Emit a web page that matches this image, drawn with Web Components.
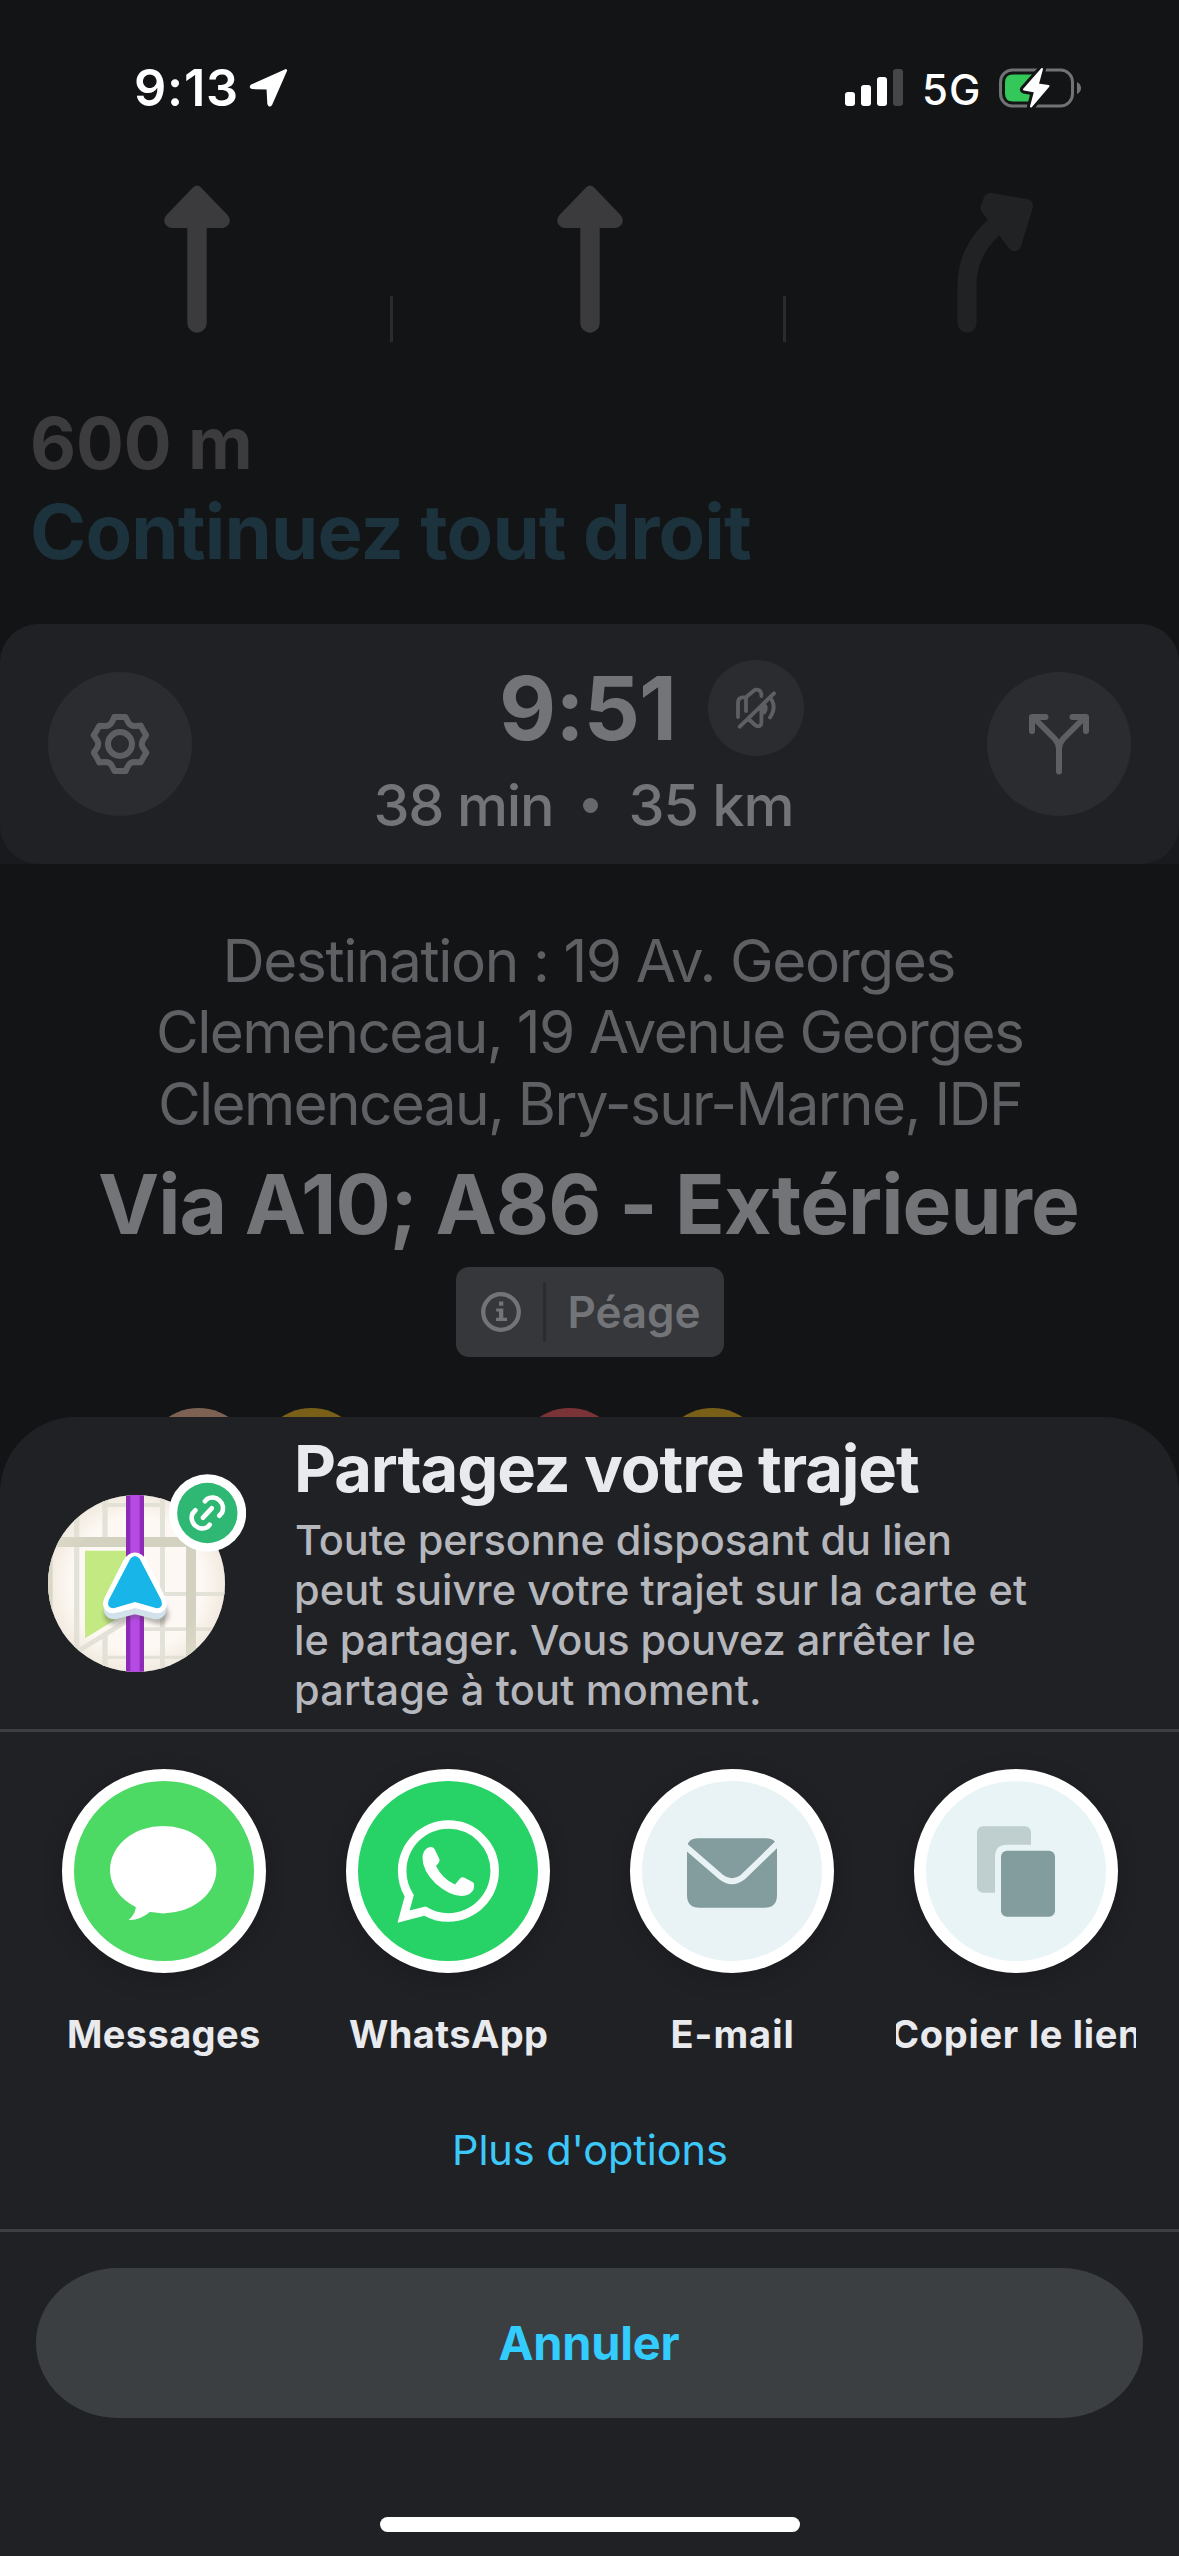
<!DOCTYPE html>
<html lang="fr">
<head>
<meta charset="utf-8">
<title>Partagez votre trajet</title>
<style>
  html, body { margin: 0; padding: 0; background: #131416; }
  body { width: 1179px; height: 2556px; overflow: hidden; font-family: Inter, "Liberation Sans", sans-serif; }
</style>
</head>
<body>
<nav-screen></nav-screen>
<script>
const define = (name, html, setup) => {
  const tpl = document.createElement('template');
  tpl.innerHTML = html.trim();
  customElements.define(name, class extends HTMLElement {
    connectedCallback() {
      if (this.shadowRoot) return;
      this.attachShadow({ mode: 'open' }).append(tpl.content.cloneNode(true));
      if (setup) setup(this, this.shadowRoot);
    }
  });
};

/* One line of type: tracking is tuned so that the ink spans exactly `w` pixels. */
const pen = document.createElement('canvas').getContext('2d');
define('fit-text', `
  <style>
    :host { display: block; flex: none; }
    span { display: block; white-space: pre; }
  </style><span><slot></slot></span>`, (host, root) => {
  const w = +host.getAttribute('w'), size = +host.getAttribute('size'), weight = host.getAttribute('weight') || 400;
  const text = host.textContent, span = root.querySelector('span');
  pen.font = `${weight} ${size}px Inter, "Liberation Sans", sans-serif`;
  const m = pen.measureText(text);
  const ink = m.actualBoundingBoxRight + m.actualBoundingBoxLeft;
  host.style.width = w + 'px';
  host.style.height = (host.getAttribute('h') || size * 1.2) + 'px';
  span.style.cssText = `font-size:${size}px;font-weight:${weight};line-height:${host.style.height};` +
    `letter-spacing:${((w - ink) / (text.length - 1)).toFixed(3)}px;margin-left:${m.actualBoundingBoxLeft.toFixed(2)}px`;
});

define('status-bar', `
  <style>
    :host { display: flex; height: 176px; box-sizing: border-box; padding: 58px 98px 58px 136px; align-items: center; color: #fff; }
    svg { display: block; flex: none; }
    .loc { margin-left: 13px; }
    .sig { margin-left: auto; }
    .net { margin: 3px 21px 0 22px; }
  </style>
  <fit-text w="100" size="50.5" weight="600" h="60">9:13</fit-text>
  <svg class="loc" width="39" height="40" viewBox="0 0 39 40" fill="#fff" stroke="#fff" stroke-width="2.6" stroke-linejoin="round"><path d="M36.8 2.4 2.6 17.8Q1.2 19.4 3.4 19.8L18.8 20.3 19.6 35.6Q20.4 38.4 22 36.2Z"/></svg>
  <svg class="sig" width="58" height="38" viewBox="0 0 58 38"><g fill="#fff"><rect y="23" width="10" height="14" rx="3"/><rect x="16" y="16" width="10" height="21" rx="3"/><rect x="32" y="8" width="10" height="29" rx="3"/></g><rect x="48" width="10" height="37" rx="3" fill="#454648"/></svg>
  <fit-text class="net" w="53" size="42" weight="450" h="50">5G</fit-text>
  <svg width="82" height="42" viewBox="999 66.500 82 42"><rect x="1000.500" y="69.500" width="72" height="36" rx="12" fill="none" stroke="#717274" stroke-width="3"/><path d="M1077 81.500Q1081 83.500 1081 87.500T1077 93.500Z" fill="#717274"/><path d="M1013 74H1035V101H1013Q1005 101 1005 93V82Q1005 74 1013 74Z" fill="#34c759"/><path d="M1042 68.500 1024 89 1035 91 1031 106 1048.500 85.500 1037.800 84Z" fill="#131416" stroke="#131416" stroke-width="8" stroke-linejoin="round"/><path d="M1042 68.500 1024 89 1035 91 1031 106 1048.500 85.500 1037.800 84Z" fill="#fff" stroke="#fff" stroke-width="2" stroke-linejoin="round"/></svg>`);

define('lane-guide', `
  <style>
    :host { display: grid; grid-template-columns: repeat(3, 393px); height: 174px; }
    div { display: flex; justify-content: center; align-items: flex-start; box-sizing: border-box;
      background: linear-gradient(#2a2b2d,#2a2b2d) right 0 top 120px / 3px 46px no-repeat; }
    div:last-child { background: none; }
    svg { display: block; margin-top: 4px; }
  </style>
  <div><svg width="90" height="160" viewBox="-45 0 90 160"><path d="M-4 7.500Q0 3.500 4 7.500L30.500 35Q34.500 40 31.500 44.500 28.500 48 25 48H9.700V143A9.700 9.700 0 0 1-9.700 143V48H-25Q-28.500 48-31.500 44.500-34.500 40-30.500 35Z" fill="#3b3b3d"/></svg></div>
  <div><svg width="90" height="160" viewBox="-45 0 90 160"><path d="M-4 7.500Q0 3.500 4 7.500L30.500 35Q34.500 40 31.500 44.500 28.500 48 25 48H9.700V143A9.700 9.700 0 0 1-9.700 143V48H-25Q-28.500 48-31.500 44.500-34.500 40-30.500 35Z" fill="#3b3b3d"/></svg></div>
  <div><svg width="110" height="160" viewBox="927.500 180 110 160"><path d="M966.500 323V284Q967 247 1001 221" fill="none" stroke="#202224" stroke-width="19" stroke-linecap="round"/><path d="M990 200 1025.500 206 1014 244 987 208Z" fill="#202224" stroke="#202224" stroke-width="14" stroke-linejoin="round"/></svg></div>`);

define('next-turn', `
  <style>:host { display: flex; flex-direction: column; height: 274px; box-sizing: border-box; padding: 50px 0 0 33px; color: #3c3c3e; }
  .s { color: #1c323d; margin-top: -1px; }</style>
  <fit-text w="216" size="71" weight="700" h="86">600 m</fit-text>
  <fit-text class="s" w="718" size="76" weight="700" h="92">Continuez tout droit</fit-text>`);

define('round-button', `
  <style>:host { display: flex; flex: none; align-items: center; justify-content: center; width: 144px; height: 144px; border-radius: 50%; background: #2b2c30; }
  :host([small]) { width: 96px; height: 96px; }</style><slot></slot>`);

define('eta-panel', `
  <style>
    :host { display: block; height: 240px; background: linear-gradient(#131416 50%, #191a1d 50%); }
    .card { display: grid; grid-template-columns: 144px 1fr 144px; height: 240px; box-sizing: border-box; padding: 0 48px; align-items: center; background: #202125; border-radius: 38px; color: #737478; }
    .mid { display: flex; flex-direction: column; height: 240px; }
    .top { display: flex; align-items: center; margin: 36px 0 0 311px; gap: 36px; }
    .bot { display: flex; align-items: center; margin: 15px 0 0 184.500px; }
    i { width: 15px; height: 15px; border-radius: 50%; background: #67686c; margin: 0 33.500px 0 32px; }
    svg { display: block; overflow: visible; fill: none; stroke: #5e5f63; stroke-linecap: round; stroke-linejoin: round; }
  </style>
  <div class="card">
    <round-button><svg width="60" height="60" viewBox="-30 -30 60 60" stroke-width="6"><defs><path id="t" d="M-5.500-27H5.500L8.300-21.500Q10.300-18 14.350-18L20.600-18.300"/></defs><circle r="12"/><use href="#t"/><use href="#t" transform="rotate(60)"/><use href="#t" transform="rotate(120)"/><use href="#t" transform="rotate(180)"/><use href="#t" transform="rotate(240)"/><use href="#t" transform="rotate(300)"/></svg></round-button>
    <div class="mid">
      <div class="top"><fit-text w="169" size="88" weight="700" h="96">9:51</fit-text>
      <round-button small><svg width="44" height="44" viewBox="-22 -22 44 44" stroke-width="3.800"><path d="M-18 9V-5Q-18-10.700-13-10.700H-10L-2-17.500Q0-19 3-17.700 5.400-16.500 5.400-12M-10-10.700V3M18-14.700-16.300 18.700M-8 10.500-1 17Q1.500 19 4 17.800 5.400 17 5.400 14V0M15.500-8.500Q20.500 0 14 9.500"/><path d="M8-3.500Q11.500 0 8 4.500Z" fill="#5e5f63"/></svg></round-button></div>
      <div class="bot"><fit-text w="174.500" size="57.500" weight="500" h="68">38 min</fit-text><i></i><fit-text w="159" size="57.500" weight="500" h="68">35 km</fit-text></div>
    </div>
    <round-button><svg width="60" height="60" viewBox="-30 -30 60 60" stroke-width="6"><path d="M0 27.500V5Q0 0-4-5L-26-27M0 5Q0 0 4-5L26-27M-13.500-27H-27V-13M13.500-27H27V-13"/></svg></round-button>
  </div>`);

define('toll-chip', `
  <style>:host { display: flex; align-items: center; width: 268px; height: 90px; border-radius: 13px; background: #36373b; box-sizing: border-box; padding-left: 25px; color: #737478; }
  i { width: 3px; height: 60px; background: #2b2c30; margin: 0 25px 0 22px; }</style>
  <svg width="40" height="40" viewBox="-20 -20 40 40" fill="#737478"><circle r="17.800" fill="none" stroke="#737478" stroke-width="4.300"/><path d="M-2-10.500H2.300V-6.300H-2ZM-4.800-3.600H2.300V5.700H6V9H-5V5.700H-2V-.5H-4.800Z"/></svg>
  <i></i><fit-text w="129" size="44" weight="600" h="52">Péage</fit-text>`);

define('trip-details', `
  <style>
    :host { display: flex; flex-direction: column; align-items: center; padding-top: 60.500px; color: #5f6064; }
    .d { margin-left: 2px; }
    .via { color: #737478; margin: 12px 3px 8.500px 0; }
    .dots { display: flex; align-self: stretch; height: 109px; margin-top: 51px; padding-left: 143.500px; }
    b { width: 109px; height: 109px; border-radius: 50%; background: #7a5f18; }
    b:nth-child(1) { background: #7d6253; } b:nth-child(2) { margin: 0 149px 0 4.500px; }
    b:nth-child(3) { background: #7a3337; margin-right: 34px; }
  </style>
  <fit-text class="d" w="726" size="58.500" h="71.500">Destination : 19 Av. Georges</fit-text>
  <fit-text class="d" w="863" size="58.500" h="71.500">Clemenceau, 19 Avenue Georges</fit-text>
  <fit-text class="d" w="859" size="58.500" h="71.500">Clemenceau, Bry-sur-Marne, IDF</fit-text>
  <fit-text class="via" w="978" size="82" weight="700" h="107">Via A10; A86 - Extérieure</fit-text>
  <toll-chip></toll-chip>
  <div class="dots"><b></b><b></b><b></b><b></b></div>`);

define('map-avatar', `
  <style>
    :host { display: block; position: relative; width: 177px; height: 177px; }
    .map { display: block; border-radius: 50%; }
    .badge { position: absolute; left: 121px; top: -21.500px; }
  </style>
  <svg class="map" width="177" height="177" viewBox="144 315 531 531">
    <defs><radialGradient id="v"><stop offset=".75" stop-color="#e9dfcf" stop-opacity="0"/><stop offset="1" stop-color="#e3dccd" stop-opacity=".5"/></radialGradient>
    <filter id="f" x="-30%" y="-30%" width="160%" height="170%"><feGaussianBlur stdDeviation="7"/></filter></defs>
    <path fill="#fdf8f3" d="M144 315h531v531H144z"/>
    <path fill="#e3e2d9" d="M222 315h16V846h-16zM307 315h16V846h-16zM480 315h15V846h-15zM323 339h55v12h-55zM432 339h63v12h-63zM495 606h180v12H495zM432 712h210v11H432zM323 797h250v10H323z"/>
    <path fill="#fdf8f3" d="M240 471H378V690L240 775z"/>
    <path stroke="#e3e2d9" stroke-width="15" d="M235 783 378 694"/>
    <path fill="#d3d2c0" d="M144 441H588V846H558V471H144zM144 471h14V700H144z"/>
    <path fill="#c3e983" d="M255 482H378V670L255 745z"/>
    <path fill="url(#v)" d="M144 315h531v531H144z"/>
    <path fill="#8e2ab5" d="M378 315h54V846h-54z"/><path fill="#b54be2" d="M391 315h28V846h-28z"/>
    <path d="M405 511 338 640 405 615 474 640Z" transform="translate(3 34)" fill="#444" stroke="#444" opacity=".38" stroke-width="58" stroke-linejoin="round" filter="url(#f)"/>
    <path d="M391 529Q405 500 419 529L474 635Q480 650 466 650L405 634 344 650Q330 650 336 635Z" transform="translate(0 15)" fill="#d2e2eb" stroke="#d2e2eb" stroke-width="46" stroke-linejoin="round"/>
    <path d="M391 523Q405 500 419 523L475 634Q481 648 466 645L405 629 344 645Q329 648 335 634Z" fill="#fff" stroke="#fff" stroke-width="48" stroke-linejoin="round"/>
    <path d="M391 506Q405 490 419 506L484 631Q491 655 470 655L405 636 341 655Q319 655 326 631Z" fill="#17b5e8"/>
  </svg>
  <svg class="badge" width="77" height="78" viewBox="506 252 231 234"><circle cx="621.500" cy="369" r="116" fill="#fff"/><circle cx="621" cy="369" r="90.500" fill="#2eb873"/><g fill="none" stroke="#fff" stroke-width="14" stroke-linecap="round"><path d="M614 334 620 327A32 32 0 0 1 665 368L657 377M628 404 622 411A32 32 0 0 1 577 370L585 361M608 383 634 355"/></g></svg>`);

define('sheet-header', `
  <style>
    :host { display: flex; height: 312px; box-sizing: border-box; padding: 0 48px; color: #b5b7bc; }
    map-avatar { margin-top: 78px; }
    .t { margin: 14px 0 0 71px; }
    .h { color: #e9eaee; margin: 0 0 8px 2px; }
  </style>
  <map-avatar></map-avatar>
  <div class="t">
    <fit-text class="h" w="621" size="65" weight="700" h="76">Partagez votre trajet</fit-text>
    <fit-text w="653" size="41.500" weight="450" h="50">Toute personne disposant du lien</fit-text>
    <fit-text w="731" size="41.500" weight="450" h="50">peut suivre votre trajet sur la carte et</fit-text>
    <fit-text w="679" size="41.500" weight="450" h="50">le partager. Vous pouvez arrêter le</fit-text>
    <fit-text w="463" size="41.500" weight="450" h="50">partage à tout moment.</fit-text>
  </div>`);

define('share-target', `
  <style>
    :host { display: flex; flex-direction: column; align-items: center; width: 240px; overflow: hidden; padding: 40px 0 20px; margin: -40px 0 0; color: #e9eaee; }
    .disc { flex: none; width: 204px; height: 204px; box-sizing: border-box; border: 12px solid #fff; border-radius: 50%; background: var(--disc); box-shadow: 0 6px 24px rgba(0,0,0,.16); }
    ::slotted(svg) { display: block; margin: -12px; }
    .l { margin-top: 37px; display: flex; }
  </style>
  <div class="disc"><slot name="icon"></slot></div><div class="l"><slot></slot></div>`);

define('share-row', `
  <style>:host { display: flex; gap: 44px; padding: 37px 0 0 44px; height: 340px; box-sizing: border-box; }</style>
  <share-target style="--disc:#4cd964"><svg slot="icon" width="204" height="204" fill="#fff"><ellipse cx="101.200" cy="100.700" rx="53.200" ry="43.700"/><path d="M74 136Q74 145 66.600 151 78 151.500 88.500 142.500Z"/></svg><fit-text w="190" size="38" weight="700" h="48">Messages</fit-text></share-target>
  <share-target style="--disc:#27d367"><svg slot="icon" width="204" height="204" fill="#fff"><path transform="translate(51.500 51.300) scale(6.370 6.400)" fill-rule="evenodd" d="M13.601 2.326A7.850 7.850 0 0 0 7.994 0C3.627 0 .068 3.558.064 7.926c0 1.399.366 2.760 1.057 3.965L0 16l4.204-1.102a7.900 7.900 0 0 0 3.790.965h.004c4.368 0 7.926-3.558 7.930-7.930A7.900 7.900 0 0 0 13.600 2.326zM7.994 14.521a6.600 6.600 0 0 1-3.356-.92l-.24-.144-2.494.654.666-2.433-.156-.251a6.560 6.560 0 0 1-1.007-3.505c0-3.626 2.957-6.584 6.591-6.584a6.560 6.560 0 0 1 4.660 1.931 6.560 6.560 0 0 1 1.928 4.660c-.004 3.639-2.961 6.592-6.592 6.592"/><path d="M76.500 89Q76.500 82.500 81 79.200 86.500 76.500 88.800 80.500L93.500 90.500Q94 93 90 97 96.500 110 109 115.500L114.500 109Q116 107.500 118.500 108.800L127 113.200Q129 115 127.500 120.500 124.500 126.500 115.500 127 104 127 89.500 114.500 76.500 101.500 76.500 89Z"/></svg><fit-text w="198" size="38" weight="700" h="48">WhatsApp</fit-text></share-target>
  <share-target style="--disc:#e9f3f5"><svg slot="icon" width="204" height="204"><path d="M68 69.300H136Q147 69.300 147 80V126Q147 138.700 134.500 138.700H69.500Q57 138.700 57 126V80Q57 69.300 68 69.300Z" fill="#839c9e"/><path d="M54 76 91 108Q102 116.500 113 108L150 72" fill="none" stroke="#e9f3f5" stroke-width="6"/></svg><fit-text w="119" size="38" weight="700" h="48">E-mail</fit-text></share-target>
  <share-target style="--disc:#e9f4f7"><svg slot="icon" width="204" height="204"><rect x="63" y="57.300" width="54" height="66.400" rx="6" fill="#bfcfcf"/><path d="M81 128V88Q81 75.700 93 75.700H120V128Z" fill="#e9f4f7"/><rect x="87" y="81.700" width="54" height="66" rx="6" fill="#839c9e"/></svg><fit-text w="248" size="38" weight="700" h="48">Copier le lien</fit-text></share-target>`);

define('share-sheet', `
  <style>
    :host { display: flex; flex-direction: column; height: 1139px; background: #202125; border-radius: 76px 76px 0 0; overflow: hidden; }
    hr { flex: none; width: 100%; height: 3px; margin: 0; border: 0; background: #3d3f42; }
    .more { display: flex; justify-content: center; height: 157px; color: #3dc8fa; padding: 53px 0 0 2px; box-sizing: border-box; }
    .cancel { display: flex; align-items: center; justify-content: center; flex: none; height: 150px; margin: 36px 36px 99px; border-radius: 82px / 75px; background: #3c3f41; color: #33ccff; }
    .home { align-self: center; width: 420px; height: 15px; border-radius: 8px; background: #fff; }
  </style>
  <sheet-header></sheet-header>
  <hr>
  <share-row></share-row>
  <div class="more"><fit-text w="271" size="41.500" h="50">Plus d'options</fit-text></div>
  <hr>
  <div class="cancel"><fit-text w="180" size="47" weight="700" h="56">Annuler</fit-text></div>
  <div class="home"></div>`);

define('nav-screen', `
  <style>
    :host { display: grid; width: 1179px; height: 2556px; overflow: hidden; background: #131416; }
    .nav, share-sheet { grid-area: 1 / 1; }
    .nav { display: flex; flex-direction: column; }
    share-sheet { align-self: end; }
  </style>
  <div class="nav"><status-bar></status-bar><lane-guide></lane-guide><next-turn></next-turn><eta-panel></eta-panel><trip-details></trip-details></div>
  <share-sheet></share-sheet>`);
</script>
</body>
</html>
